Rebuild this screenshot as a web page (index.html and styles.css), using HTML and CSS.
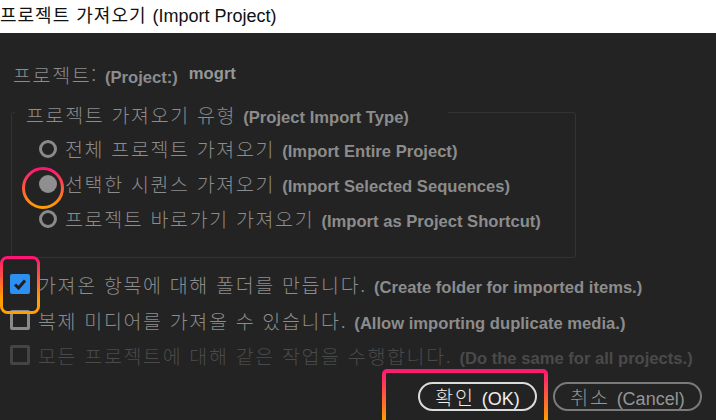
FILE: index.html
```html
<!DOCTYPE html>
<html lang="ko">
<head>
<meta charset="utf-8">
<title>프로젝트 가져오기 (Import Project)</title>
<link rel="stylesheet" href="styles.css">
</head>
<body>
<div class="page">
  <div class="titlebar"><span class="title-text"><span class="ko">프로젝트 가져오기 </span><span class="en-title">(Import Project)</span></span></div>

  <div class="dialog">
    <div class="project-row">
      <span class="label"><span class="ko">프로젝트: </span><span class="en">(Project:)</span></span><span class="en value">mogrt</span>
    </div>

    <fieldset class="group">
      <legend class="legend"><span class="ko">프로젝트 가져오기 유형 </span><span class="en">(Project Import Type)</span></legend>
      <div class="option">
        <span class="radio"></span>
        <span class="label"><span class="ko">전체 프로젝트 가져오기 </span><span class="en">(Import Entire Project)</span></span>
      </div>
      <div class="option">
        <span class="radio checked"></span>
        <span class="label"><span class="ko">선택한 시퀀스 가져오기 </span><span class="en">(Import Selected Sequences)</span></span>
      </div>
      <div class="option">
        <span class="radio"></span>
        <span class="label"><span class="ko">프로젝트 바로가기 가져오기 </span><span class="en">(Import as Project Shortcut)</span></span>
      </div>
    </fieldset>

    <div class="checks">
      <div class="check-row">
        <span class="checkbox checked">
          <svg viewBox="0 0 20 20" width="20" height="20"><polyline points="5,10.5 8.5,14 15,6.5" fill="none" stroke="#1e1e1e" stroke-width="3"/></svg>
        </span>
        <span class="label"><span class="ko">가져온 항목에 대해 폴더를 만듭니다. </span><span class="en">(Create folder for imported items.)</span></span>
      </div>
      <div class="check-row">
        <span class="checkbox"></span>
        <span class="label"><span class="ko">복제 미디어를 가져올 수 있습니다. </span><span class="en">(Allow importing duplicate media.)</span></span>
      </div>
      <div class="check-row disabled">
        <span class="checkbox"></span>
        <span class="label"><span class="ko">모든 프로젝트에 대해 같은 작업을 수행합니다. </span><span class="en">(Do the same for all projects.)</span></span>
      </div>
    </div>

    <div class="buttons">
      <button class="btn primary"><span class="btn-text"><span class="ko">확인 </span><span class="en">(OK)</span></span></button>
      <button class="btn"><span class="btn-text"><span class="ko">취소 </span><span class="en">(Cancel)</span></span></button>
    </div>
  </div>

  <svg class="mark mark-radio" width="42" height="42" viewBox="0 0 42 42">
    <defs><linearGradient id="g1" x1="0" y1="0" x2="0" y2="1"><stop offset="0" stop-color="#ff1476"/><stop offset="1" stop-color="#ff9f00"/></linearGradient></defs>
    <circle cx="21" cy="21" r="19.5" fill="none" stroke="url(#g1)" stroke-width="3"/>
  </svg>
  <svg class="mark mark-check" width="40" height="58" viewBox="0 0 40 58">
    <defs><linearGradient id="g2" x1="0" y1="0" x2="0" y2="1"><stop offset="0" stop-color="#ff1476"/><stop offset="0.75" stop-color="#ff9f00"/><stop offset="1" stop-color="#ff9f00"/></linearGradient></defs>
    <rect x="1.5" y="1.5" width="37" height="55" rx="6" fill="none" stroke="url(#g2)" stroke-width="3"/>
  </svg>
  <svg class="mark mark-ok" width="166" height="52" viewBox="0 0 166 52">
    <defs><linearGradient id="g3" gradientUnits="userSpaceOnUse" x1="0" y1="0" x2="0" y2="52"><stop offset="0" stop-color="#ff1476"/><stop offset="1" stop-color="#ff9f00"/></linearGradient></defs>
    <rect x="2" y="2" width="162" height="80" rx="3" fill="none" stroke="url(#g3)" stroke-width="4"/>
  </svg>
</div>
</body>
</html>
```

FILE: styles.css
```css
html, body {
  margin: 0;
  padding: 0;
  background: #232323;
  overflow: hidden;
}
.page {
  position: relative;
  width: 716px;
  height: 420px;
  overflow: hidden;
  background: #232323;
  font-family: "Liberation Sans", "Noto Sans CJK KR", sans-serif;
}
.ko {
  font-family: "Noto Sans CJK KR", "Liberation Sans", sans-serif;
  font-weight: 300;
  letter-spacing: 1.65px;
}
.en {
  font-family: "Liberation Sans", "Noto Sans CJK KR", sans-serif;
  font-weight: 700;
  font-size: 16.6px;
}
.titlebar {
  height: 33px;
  background: #ffffff;
  color: #111111;
  font-size: 18px;
  display: flex;
  align-items: center;
  padding-bottom: 5px;
  box-sizing: border-box;
  white-space: nowrap;
}
.titlebar .ko { font-weight: 400; letter-spacing: 1px; }
.en-title {
  font-family: "Liberation Sans", sans-serif;
  font-size: 18px;
}
.dialog {
  display: flex;
  flex-direction: column;
  color: #8c8c8c;
  font-size: 19.5px;
}
.project-row {
  margin-top: 24px;
  height: 34px;
  display: flex;
  align-items: center;
  padding-left: 13px;
  white-space: nowrap;
}
.project-row .value {
  margin-left: 11px;
  color: #979797;
}
.group {
  margin: 4px 0 0 11px;
  width: 565px;
  box-sizing: border-box;
  border: 1px solid #333333;
  border-radius: 3px;
  padding: 2px 0 21px 27px;
  min-width: 0;
}
.legend {
  margin-left: -24px;
  padding: 9px 39px 0 11px;
  line-height: 22px;
  white-space: nowrap;
}
.option {
  height: 35px;
  display: flex;
  align-items: center;
  white-space: nowrap;
}
.radio {
  width: 18px;
  height: 18px;
  box-sizing: border-box;
  border: 3px solid #8a8a8a;
  border-radius: 50%;
  margin-right: 8px;
  flex: none;
}
.radio.checked {
  border: none;
  background: #8f8f8f;
}
.label {
  white-space: nowrap;
}
.checks {
  margin-top: 8px;
  display: flex;
  flex-direction: column;
}
.check-row {
  height: 36px;
  display: flex;
  align-items: center;
  padding-left: 10px;
  white-space: nowrap;
}
.check-row:nth-child(3) { height: 34px; }
.checkbox {
  width: 20px;
  height: 20px;
  box-sizing: border-box;
  border: 3px solid #8a8a8a;
  border-radius: 2px;
  margin-right: 8px;
  flex: none;
  display: flex;
}
.checkbox.checked {
  border: none;
  background: #2d8ff0;
}
.check-row.disabled { color: #4a4a4a; }
.check-row.disabled .checkbox { border-color: #444444; }
.buttons {
  margin-top: 10px;
  display: flex;
  justify-content: flex-end;
  gap: 16px;
  padding-right: 14px;
}
.btn {
  height: 29px;
  box-sizing: border-box;
  border: 2px solid #7a7a7a;
  border-radius: 15px;
  background: transparent;
  color: #959595;
  font-size: 19.5px;
  width: 149px;
  padding: 0;
  display: flex;
  align-items: center;
  justify-content: center;
  white-space: nowrap;
}
.btn .en { font-weight: 400; font-size: 18px; }
.btn.primary {
  width: 119px;
  border-color: #dcdcdc;
  color: #ededed;
}
.mark {
  position: absolute;
  display: block;
}
.mark-radio { left: 22px; top: 167px; }
.mark-check { left: 0; top: 256px; }
.mark-ok { left: 382px; top: 369px; }
```
